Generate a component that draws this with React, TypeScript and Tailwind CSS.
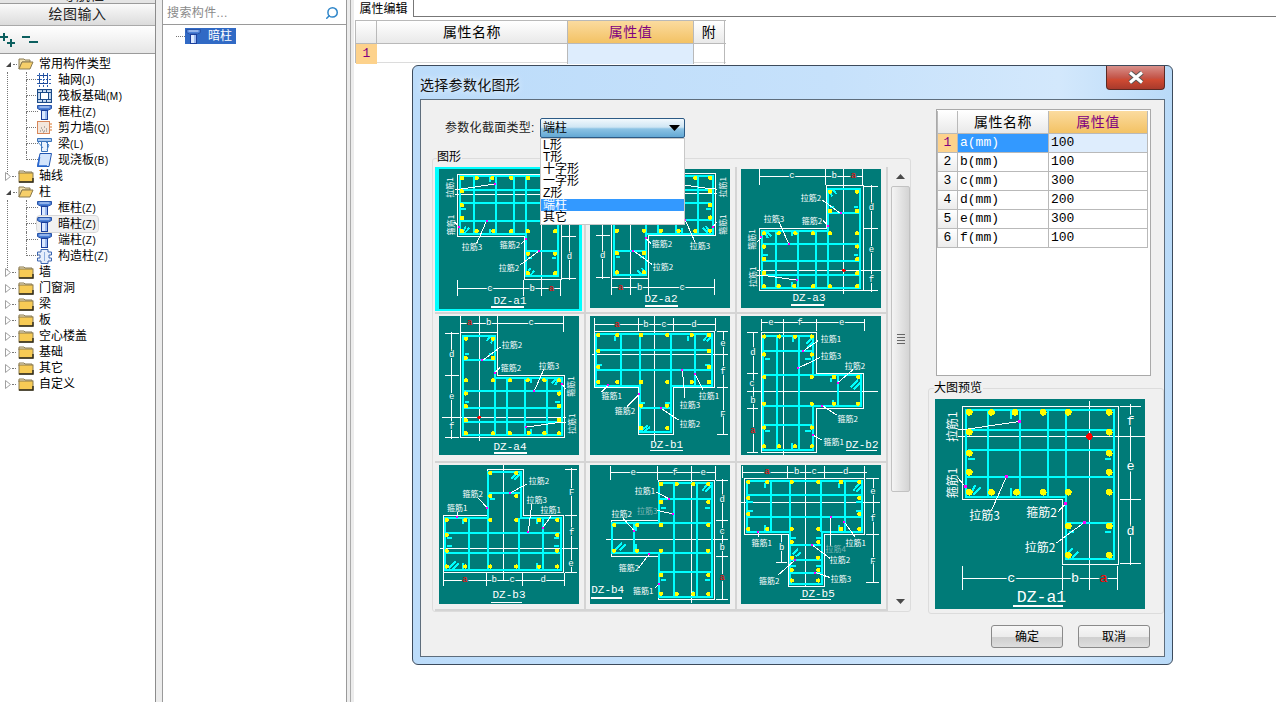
import { Search } from "lucide-react";

type Pt = [number, number];
type Seg = [number, number, number, number];
type Label = { x: number; y: number; t: string; up?: boolean; dim?: boolean; color?: string };
type Plan = {
    wall: Pt[];
    cage: Pt[];
    bars: Seg[];
    hooks: Seg[];
    thin: Seg[];
    dots: Pt[];
    pins: Pt[];
    leaders: Seg[];
    labels: Label[];
    red?: Pt;
};

const rows = (list: [number, number[]][]): Pt[] => list.flatMap(([y, xs]) => xs.map((x) => [x, y] as Pt));
const dimLabels = (list: [string, number, number, string?][]): Label[] =>
    list.map(([t, x, y, color]) => ({ t, x, y, dim: true, color }));

// 端柱 a1, the other three a-types are flips of this one
const a1: Plan = {
    wall: [[18, 5], [122, 5], [122, 110], [85, 110], [85, 67], [18, 67]],
    cage: [[20.5, 7], [119, 7], [119, 106.5], [87, 106.5], [87, 65], [20.5, 65]],
    bars: [
        [35, 7, 35, 65], [56.7, 7, 56.7, 65], [75, 7, 75, 65], [87, 7, 87, 65],
        [20.5, 20.7, 119, 20.7], [22, 33.9, 119, 33.9], [20.5, 51.8, 119, 51.8], [87, 82.4, 119, 82.4],
    ],
    hooks: [
        [23.3, 64, 27, 57.3], [25.5, 64, 30.4, 59], [50.7, 8, 50.7, 13], [50.7, 59.5, 50.7, 65],
        [22, 40, 26.7, 40], [113.3, 40, 117.3, 40], [89, 88.5, 92.6, 88.5], [113.3, 88.5, 117.3, 88.5],
        [87.8, 104, 91.6, 99.5], [91.8, 105.8, 95.5, 101.8],
    ],
    thin: [
        [102.9, 1, 102.9, 127], [15.6, 25, 140, 25], [130.4, 3, 130.4, 110.7], [123, 5, 137, 5],
        [123, 67.3, 137, 67.3], [123, 109.6, 137, 109.6], [17.8, 119.5, 121.8, 119.5], [18.2, 111, 18.2, 127],
        [84.9, 111, 84.9, 127], [121.8, 111, 121.8, 127],
    ],
    dots: rows([
        [8.9, [22.9, 37.6, 53.3, 72.2, 88.9, 116.2]],
        [22.2, [22.9, 116.2]],
        [36.2, [22.9, 116.2]],
        [48.9, [22.9, 116.2]],
        [62.2, [22.9, 37.6, 54.4, 72.2, 88.9, 116.2]],
        [84.7, [88.9, 116.2]],
        [104.2, [88.9, 116.2]],
    ]),
    pins: [[56.2, 15], [20.2, 58.2], [47.6, 51.8], [87, 69.8], [99.6, 82.2]],
    leaders: [
        [15.6, 20.2, 22, 20], [22, 20, 56.2, 15], [15.6, 53, 20.2, 58.2], [37.8, 74, 47.6, 51.8],
        [82.2, 75, 87, 69.8], [81, 96, 99.6, 82.2],
    ],
    labels: [
        { t: "拉筋1", x: 11, y: 18.4, up: true },
        { t: "箍筋1", x: 11, y: 56, up: true },
        { t: "拉筋3", x: 33, y: 77 },
        { t: "箍筋2", x: 71, y: 75 },
        { t: "拉筋2", x: 70, y: 98 },
        ...dimLabels([["f", 130.4, 15], ["e", 130.4, 45], ["d", 130.4, 88], ["c", 50.9, 119.5], ["b", 93.3, 119.5], ["a", 112.4, 119.5, "#ff0000"]]),
    ],
    red: [102.9, 25],
};

const mapPlan = (p: Plan, fx: (x: number) => number, fy: (y: number) => number): Plan => {
    const pt = ([x, y]: Pt): Pt => [fx(x), fy(y)];
    const seg = ([a, b, c, d]: Seg): Seg => [fx(a), fy(b), fx(c), fy(d)];
    return {
        wall: p.wall.map(pt),
        cage: p.cage.map(pt),
        bars: p.bars.map(seg),
        hooks: p.hooks.map(seg),
        thin: p.thin.map(seg),
        dots: p.dots.map(pt),
        pins: p.pins.map(pt),
        leaders: p.leaders.map(seg),
        labels: p.labels.map((l) => ({ ...l, x: fx(l.x), y: fy(l.y) })),
        red: p.red && pt(p.red),
    };
};

const same = (v: number) => v;
const flipX = (x: number) => 143 - x;
const flipY = (y: number) => 127 - y;

const b1: Plan = {
    wall: [[4, 16], [124, 16], [124, 72], [83, 72], [83, 119], [48, 119], [48, 72], [4, 72]],
    cage: [[6, 18], [122, 18], [122, 70], [81, 70], [81, 117], [50, 117], [50, 70], [6, 70]],
    bars: [[31, 18, 31, 70], [50, 18, 50, 70], [81, 18, 81, 70], [105, 18, 105, 70], [6, 34, 122, 34], [6, 54.7, 122, 54.7], [50, 93, 81, 93]],
    hooks: [[25, 20, 25, 25], [98.3, 20, 98.3, 25], [113.3, 24.7, 119.3, 18], [116.7, 25.3, 123, 19.3], [6.7, 49, 11.7, 49], [115, 49, 120, 49], [50, 88, 55, 88], [75, 88, 81, 88], [50, 116, 58, 110], [54, 116, 60, 112]],
    thin: [[64.3, 0, 64.3, 126], [2, 39, 138, 39], [4, 8.7, 125, 8.7], [4, 2.3, 4, 14.7], [48.3, 2.3, 48.3, 14.7], [83, 2.3, 83, 14.7], [125, 2.3, 125, 14.7], [133.3, 14.7, 133.3, 119], [127, 16, 138, 16], [127, 72, 138, 72], [127, 119, 138, 119]],
    dots: rows([[19, [8.3, 27.3, 51, 77.3, 101.7, 119]], [35.3, [8.3, 119]], [51.3, [8.3, 119]], [66.3, [8.3, 27.3, 51, 77.3, 101.7, 119]], [90.3, [51, 77.3]], [113, [51, 77.3]]]),
    pins: [[18.3, 69.7], [49.3, 79], [92.3, 54], [105, 58], [71, 93]],
    leaders: [[11.7, 76.3, 18.3, 69.7], [36.7, 91.3, 49.3, 79], [95, 83, 92.3, 54], [113, 74.7, 105, 58], [88.3, 104.7, 71, 93]],
    labels: [
        { t: "箍筋1", x: 21.7, y: 80 }, { t: "箍筋2", x: 35, y: 95.7 }, { t: "拉筋3", x: 100, y: 88.7 },
        { t: "拉筋1", x: 119, y: 80 }, { t: "拉筋2", x: 100, y: 108.7 },
        ...dimLabels([["a", 27.3, 9, "#ff0000"], ["b", 56, 9], ["c", 74, 9], ["d", 104, 9], ["e", 133, 28], ["f", 133, 56], ["F", 133, 99.7]]),
    ],
};

const b2: Plan = {
    wall: [[20, 17], [75, 17], [75, 58], [122, 58], [122, 93], [75, 93], [75, 137], [20, 137]],
    cage: [[21.5, 19.7], [72.3, 19.7], [72.3, 59.7], [120, 59.7], [120, 90.7], [72.3, 90.7], [72.3, 134.7], [21.5, 134.7]],
    bars: [[36.3, 20, 36.3, 135], [58, 20, 58, 135], [96.7, 60, 96.7, 91], [21.5, 35.7, 72, 35.7], [21.5, 59.7, 72, 59.7], [21.5, 90.7, 72, 90.7], [21.5, 109.7, 72, 109.7]],
    hooks: [[52, 21, 52, 26], [65, 28, 71, 22], [66, 32, 72, 26], [24, 43, 29, 43], [64, 43, 70, 43], [24, 116, 29, 116], [64, 116, 70, 116], [51, 128, 51, 134], [90, 62, 90, 66], [110, 72, 117, 64], [113, 74, 119, 67], [92, 85, 92, 90]],
    thin: [[42.3, 3, 42.3, 141], [6, 76.3, 137, 76.3], [20, 7, 124, 7], [20, 3, 20, 14.7], [75.7, 3, 75.7, 14.7], [123, 3, 123, 14.7], [12.3, 16, 12.3, 138], [6, 17, 17, 17], [6, 58, 17, 58], [6, 93, 17, 93], [6, 137, 17, 137]],
    dots: rows([[20.7, [23.3, 38.3, 54, 70.7]], [38.7, [23.3, 70.7]], [61.3, [23.3, 70.7, 93, 117.3]], [88.3, [23.3, 70.7, 93, 117.3]], [112.3, [23.3, 70.7]], [131.3, [23.3, 38.3, 54, 70.7]]]),
    pins: [[62.3, 35.3], [57.3, 52.3], [96.7, 67.3], [81.3, 90.3], [72.3, 120.3]],
    leaders: [[77.3, 24.7, 62.3, 35.3], [79, 42, 57.3, 52.3], [112.3, 53.7, 96.7, 67.3], [95.7, 99.7, 81.3, 90.3], [80.7, 124.7, 72.3, 120.3]],
    labels: [
        { t: "拉筋1", x: 90, y: 23 }, { t: "拉筋3", x: 90, y: 40.3 }, { t: "拉筋2", x: 114, y: 49.7 },
        { t: "箍筋2", x: 106.7, y: 103.7 }, { t: "箍筋1", x: 92.7, y: 126.3 },
        ...dimLabels([["e", 30, 7], ["f", 59, 7], ["e", 100.7, 7], ["d", 12, 37], ["c", 11, 69], ["b", 12, 86], ["a", 12, 115.7, "#ff0000"]]),
    ],
};

const b3: Plan = {
    wall: [[48, 5], [84, 5], [84, 51], [124, 51], [124, 108], [4, 108], [4, 51], [48, 51]],
    cage: [[49.3, 6.7], [81.7, 6.7], [81.7, 53], [121.7, 53], [121.7, 105.7], [6, 105.7], [6, 53], [49.3, 53]],
    bars: [[29.7, 53, 29.7, 106], [49.3, 53, 49.3, 106], [80, 53, 80, 106], [104.3, 53, 104.3, 106], [49.3, 28.3, 81, 28.3], [6, 68, 122, 68], [6, 89, 122, 89]],
    hooks: [[72, 14, 78, 8], [75, 15, 81, 9], [51, 34, 56, 34], [24, 54, 24, 59], [98, 54, 98, 59], [8, 74, 13, 74], [115, 74, 120, 74], [8, 82, 13, 82], [115, 82, 120, 82], [10, 104, 17, 97], [14, 105, 20, 99], [24, 99, 24, 105], [98, 99, 98, 105]],
    thin: [[64.3, 0, 64.3, 117], [1, 84, 139, 84], [4, 116.3, 126, 116.3], [4.3, 109, 4.3, 121.7], [47.7, 109, 47.7, 121.7], [83.7, 109, 83.7, 121.7], [125, 109, 125, 121.7], [132.7, 3.3, 132.7, 109], [126, 4.7, 137.7, 4.7], [126, 51.3, 137.7, 51.3], [126, 108, 137.7, 108]],
    dots: rows([[8.3, [51.3, 77.3]], [31.3, [51.3, 77.3]], [55.3, [7.7, 26.3, 51.3, 77.3, 100, 118.3]], [70.3, [7.7, 118.3]], [86.3, [7.7, 118.3]], [102.3, [7.7, 26.3, 51.3, 77.3, 100, 118.3]]]),
    pins: [[71.3, 28.3], [48.3, 43.3], [89.3, 67.3], [103.7, 63.3], [18.3, 52.3]],
    leaders: [[87.7, 19, 71.3, 28.3], [39.3, 33.3, 48.3, 43.3], [92.7, 39.7, 89.3, 67.3], [112.7, 50.7, 103.7, 63.3], [18.3, 47.3, 18.3, 52.3]],
    labels: [
        { t: "拉筋2", x: 100, y: 15.7 }, { t: "箍筋2", x: 33.7, y: 28.3 }, { t: "拉筋3", x: 97.7, y: 35 },
        { t: "箍筋1", x: 18.3, y: 43.3 }, { t: "拉筋1", x: 111.7, y: 44.7 },
        ...dimLabels([["a", 26, 116, "#ff0000"], ["b", 55.3, 116], ["c", 73.3, 116], ["d", 104.3, 116], ["F", 132.7, 28], ["f", 132.7, 69], ["e", 132, 99.7]]),
    ],
};

const b4: Plan = {
    wall: [[68, 16], [124, 16], [124, 135], [68, 135], [68, 92], [21, 92], [21, 56], [68, 56]],
    cage: [[69.3, 17.7], [122, 17.7], [122, 132.7], [69.3, 132.7], [69.3, 89], [22.3, 89], [22.3, 58.3], [69.3, 58.3]],
    bars: [[84.3, 18, 84.3, 133], [106.7, 18, 106.7, 133], [44.3, 58, 44.3, 89], [69, 34.7, 122, 34.7], [22, 58, 122, 58], [22, 89, 122, 89], [69, 107.3, 122, 107.3]],
    hooks: [[112, 26, 118, 19], [115, 27, 121, 21], [71, 43, 76, 43], [115, 43, 120, 43], [26, 85, 32, 78], [30, 86, 36, 80], [46, 60, 46, 66], [46, 80, 46, 88], [71, 116, 76, 116], [115, 116, 120, 116], [84, 127, 84, 132], [103, 127, 103, 132]],
    thin: [[101.7, 1, 101.7, 139], [16, 75, 138, 75], [20, 8, 125, 8], [20, 1.3, 20, 14.7], [67.7, 1.3, 67.7, 14.7], [125, 1.3, 125, 14.7], [132.3, 14, 132.3, 135.7], [126, 15.7, 138, 15.7], [126, 56.3, 138, 56.3], [126, 92.3, 138, 92.3], [126, 135, 138, 135]],
    dots: rows([[19.3, [71, 86.7, 103.3, 118.3]], [37.3, [71, 118.3]], [60.3, [24.3, 47.3, 71, 118.3]], [86.3, [24.3, 47.3, 71, 118.3]], [110.7, [71, 118.3]], [129.7, [71, 86.7, 103.3, 118.3]]]),
    pins: [[79.3, 34.3], [83.3, 49.3], [44.3, 66.3], [59.3, 89.7], [69.3, 119.7]],
    leaders: [[66.7, 27.3, 79.3, 34.3], [66.7, 45.7, 83.3, 49.3], [33.3, 54, 44.3, 66.3], [48.3, 104, 59.3, 89.7], [65, 124, 69.3, 119.7]],
    labels: [
        { t: "拉筋1", x: 55, y: 25.7 }, { t: "拉筋3", x: 57.3, y: 45.7, color: "#7fb5b3" }, { t: "拉筋2", x: 31.7, y: 49 },
        { t: "箍筋2", x: 39, y: 103.3 }, { t: "箍筋1", x: 53.3, y: 126.3 },
        ...dimLabels([["e", 43.3, 8], ["f", 85, 8], ["e", 113.3, 8], ["d", 132.3, 35.7], ["c", 132.3, 67.3], ["b", 132.3, 84], ["a", 132.3, 114, "#ff0000"]]),
    ],
};

const b5: Plan = {
    wall: [[3, 14], [123, 14], [123, 70], [83, 70], [83, 122], [47, 122], [47, 70], [3, 70]],
    cage: [[5.7, 16], [120.7, 16], [120.7, 67.3], [80.7, 67.3], [80.7, 119.7], [49, 119.7], [49, 67.3], [5.7, 67.3]],
    bars: [[29.7, 16, 29.7, 67], [49, 16, 49, 67], [79.5, 16, 79.5, 67], [104, 16, 104, 67], [6, 30.7, 121, 30.7], [6, 52.7, 121, 52.7], [49, 80.7, 81, 80.7], [49, 95.7, 81, 95.7], [49, 109, 81, 109]],
    hooks: [[112, 26, 118, 19], [115, 27, 121, 21], [24, 18, 24, 23], [98, 18, 98, 23], [7, 37, 12, 37], [115, 37, 120, 37], [7, 46, 12, 46], [115, 46, 120, 46], [24, 60, 24, 66], [98, 60, 98, 66], [52, 90, 57, 84], [55, 92, 60, 88], [50, 74, 55, 74], [75, 74, 80, 74], [75, 102, 80, 102], [50, 102, 55, 102]],
    thin: [[64.7, 0, 64.7, 123], [0, 37.3, 139, 37.3], [1.3, 7.3, 125.7, 7.3], [1.3, 1, 1.3, 13], [46, 1, 46, 13], [83.3, 1, 83.3, 13], [123.3, 1, 123.3, 13], [132.3, 13, 132.3, 118], [125, 14, 138, 14], [125, 70, 138, 70], [125, 118, 138, 118], [40.7, 70, 40.7, 98], [35, 70, 46, 70], [35, 98, 46, 98]],
    dots: rows([[17.3, [7.3, 26.3, 50.7, 77.3, 100, 118.3]], [33.3, [7.3, 118.3]], [49.3, [7.3, 118.3]], [64.3, [7.3, 26.3, 50.7, 77.3, 100, 118.3]], [77.3, [50.7, 77.3]], [93.3, [50.7, 77.3]], [105.7, [50.7, 77.3]], [116.3, [50.7, 77.3]]]),
    pins: [[17.3, 67.3], [89.7, 52.7], [103.3, 57.3], [71.3, 80.7], [54, 95.7], [74.3, 108.3]],
    leaders: [[17.3, 67.3, 17.3, 73], [89.7, 52.7, 89.7, 82], [103.3, 57.3, 114, 72.3], [71.3, 80.7, 89, 94], [54, 95.7, 37.3, 110.7], [74.3, 108.3, 89, 113.3]],
    labels: [
        { t: "箍筋1", x: 20.7, y: 78 }, { t: "拉筋1", x: 114.7, y: 78 }, { t: "拉筋4", x: 94.7, y: 84, color: "#7fb5b3" },
        { t: "拉筋2", x: 99, y: 94.7 }, { t: "箍筋2", x: 28.3, y: 116.7 }, { t: "拉筋3", x: 100, y: 114.7 },
        ...dimLabels([["a", 26.3, 7, "#ff0000"], ["b", 55.7, 7], ["c", 73.3, 7], ["d", 104.7, 7], ["e", 132, 27], ["f", 132, 54], ["F", 132, 98], ["b", 40.7, 84]]),
    ],
};

type Tile = { plan: Plan; name: string; tx: number; ty: number; ux: number; uw: number; uy: number };

const tiles: Tile[] = [
    { plan: a1, name: "DZ-a1", tx: 71, ty: 132, ux: 52, uw: 33, uy: 138 },
    { plan: mapPlan(a1, flipX, same), name: "DZ-a2", tx: 71, ty: 131, ux: 55, uw: 33, uy: 138 },
    { plan: mapPlan(a1, same, flipY), name: "DZ-a3", tx: 68, ty: 130, ux: 50, uw: 33, uy: 137 },
    { plan: mapPlan(a1, flipX, flipY), name: "DZ-a4", tx: 71, ty: 132, ux: 55, uw: 33, uy: 138 },
    { plan: b1, name: "DZ-b1", tx: 76.7, ty: 130, ux: 60, uw: 33, uy: 135.7 },
    { plan: b2, name: "DZ-b2", tx: 121, ty: 130, ux: 105, uw: 31, uy: 135.7 },
    { plan: b3, name: "DZ-b3", tx: 70, ty: 130.7, ux: 52, uw: 31, uy: 138.5 },
    { plan: b4, name: "DZ-b4", tx: 17.7, ty: 126, ux: 1, uw: 31, uy: 134 },
    { plan: b5, name: "DZ-b5", tx: 77.3, ty: 129.7, ux: 59, uw: 31, uy: 135.7 },
];

function Drawing({ tile, big }: { tile: Tile; big?: boolean }) {
    const { plan } = tile;
    const pts = (p: Pt[]) => p.map((q) => q.join(",")).join(" ");
    const thin = { vectorEffect: "non-scaling-stroke" as const };
    const line = (s: Seg, i: number, stroke: string, w: number) => (
        <line key={i} x1={s[0]} y1={s[1]} x2={s[2]} y2={s[3]} stroke={stroke} strokeWidth={w} {...thin} />
    );
    return (
        <svg viewBox="0 0 140 140" preserveAspectRatio="none" shapeRendering="crispEdges" className="block h-full w-full bg-[#007b78]">
            <polygon points={pts(plan.wall)} fill="none" stroke="#fff" strokeWidth={1} {...thin} />
            {plan.thin.map((s, i) => line(s, i, "#fff", 1))}
            <polygon points={pts(plan.cage)} fill="none" stroke="#00ffff" strokeWidth={2} {...thin} />
            {plan.bars.map((s, i) => line(s, i, "#00ffff", 2))}
            {plan.hooks.map((s, i) => line(s, i, "#00ffff", 2))}
            {plan.leaders.map((s, i) => line(s, i, "#fff", 1))}
            {plan.dots.map(([x, y], i) => (
                <circle key={i} cx={x} cy={y} r={2.2} fill="#ffff00" />
            ))}
            {plan.pins.map(([x, y], i) => (
                <rect key={i} x={x - 1} y={y - 1} width={2} height={2} fill="#ff00ff" />
            ))}
            {plan.red && <circle cx={plan.red[0]} cy={plan.red[1]} r={big ? 2.2 : 1.7} fill="#ff0000" />}
            {plan.labels.map((l, i) => (
                <text
                    key={i}
                    x={l.x}
                    y={l.y}
                    fontSize={l.dim ? 9 : 8}
                    textAnchor="middle"
                    dominantBaseline="central"
                    fill={l.color ?? "#fff"}
                    stroke={l.dim ? "#007b78" : "none"}
                    strokeWidth={l.dim ? 2 : 0}
                    paintOrder="stroke"
                    transform={l.up ? `rotate(-90 ${l.x} ${l.y})` : undefined}
                    className={l.dim ? "font-['Liberation_Mono',monospace]" : "font-['Noto_Sans_CJK_SC',sans-serif]"}
                >
                    {l.t}
                </text>
            ))}
            <text x={tile.tx} y={tile.ty} fontSize={11} textAnchor="middle" dominantBaseline="central" fill="#fff" className="font-['Liberation_Mono',monospace]">
                {tile.name}
            </text>
            <rect x={tile.ux} y={tile.uy - 0.8} width={tile.uw} height={1.5} fill="#fff" />
        </svg>
    );
}

/* tree icons */
function FolderIcon({ open }: { open?: boolean }) {
    if (open) {
        return (
            <svg width="16" height="14" viewBox="0 0 16 14" className="shrink-0">
                <path d="M1 2h5l1 1h5v2H4L1 12z" fill="#f3e2b0" stroke="#8a7a50" />
                <path d="M4 5h11l-3 7H1z" fill="#f6cf6a" stroke="#8a7a50" />
            </svg>
        );
    }
    return (
        <svg width="16" height="14" viewBox="0 0 16 14" className="shrink-0">
            <path d="M1 2h5l1 1h7v2H1z" fill="#f6eac6" stroke="#8a7a50" />
            <rect x="1" y="4" width="14" height="9" fill="#f7cb55" stroke="#8a7a50" />
            <path d="M1 13h14V9" fill="none" stroke="#2e2a1a" strokeWidth="1.4" />
        </svg>
    );
}

function ColumnIcon() {
    return (
        <svg width="15" height="15" viewBox="0 0 15 15" className="shrink-0">
            <path d="M.5 .5h14v3l-3 1.5h-8l-3-1.5z" fill="#4b7fd6" stroke="#2a55a8" />
            <path d="M2.5 2h10" stroke="#dbe8ff" />
            <rect x="4.5" y="5.5" width="6" height="9" fill="#dce9ff" stroke="#1b3f9c" />
            <path d="M9 6v8" stroke="#5f8be0" />
        </svg>
    );
}

function GridIcon() {
    return (
        <svg width="15" height="14" viewBox="0 0 15 14" className="shrink-0">
            <path d="M0 2.5h15M0 6.5h15M0 10.5h15M2.5 0v14M6.5 0v14M10.5 0v14" stroke="#2d5fb0" strokeDasharray="2 1" />
            <path d="M2.5 2.5h8v8h-8z" fill="none" stroke="#1e4a9a" />
        </svg>
    );
}

function RaftIcon() {
    return (
        <svg width="15" height="14" viewBox="0 0 15 14" className="shrink-0">
            <rect x=".5" y=".5" width="14" height="13" fill="#cfe0f5" stroke="#1d4b88" strokeWidth="1.2" />
            <rect x="3.5" y="3.5" width="8" height="7" fill="#fff" stroke="#1d4b88" />
            <path d="M0 3.5h3M12 3.5h3M0 10.5h3M12 10.5h3M5.5 0v3M9.5 0v3M5.5 11v3M9.5 11v3" stroke="#1d4b88" />
        </svg>
    );
}

function WallIcon() {
    return (
        <svg width="15" height="14" viewBox="0 0 15 14" className="shrink-0">
            <rect x=".5" y=".5" width="12" height="12" fill="#f4e7dc" stroke="#d8875a" />
            <path d="M3 10h1M5 9h1M7 10h1M9 8h1M4 7h1M7 6h1M9 10h1M6 11h1" stroke="#777" />
            <path d="M13 3h2M13 6h2M13 9h2" stroke="#d8772a" />
        </svg>
    );
}

function BeamIcon() {
    return (
        <svg width="15" height="15" viewBox="0 0 15 15" className="shrink-0">
            <path d="M.5 1.5h14v3h-14z" fill="#a9c8ee" stroke="#3a72b8" />
            <path d="M4.5 4.5h6v10h-6z" fill="#eaf2fd" stroke="#3a72b8" />
            <path d="M1 5l5 6M9 5l3 3-2 5" fill="none" stroke="#4f8ad0" />
        </svg>
    );
}

function SlabIcon() {
    return (
        <svg width="15" height="14" viewBox="0 0 15 14" className="shrink-0">
            <path d="M3 .5h11.5L12 13.5H.5z" fill="#d3e4fb" stroke="#1f55b0" />
            <path d="M2.5 4L1 13h9" fill="none" stroke="#2a68d0" strokeWidth="1.6" />
        </svg>
    );
}

function PlugIcon() {
    return (
        <svg width="15" height="15" viewBox="0 0 15 15" className="shrink-0">
            <path d="M4 .5h7v2.5h3.5v3H12v3h2.5v3H11v2.5H4V12H.5V9H3V6H.5V3H4z" fill="#e6eefb" stroke="#3a65b0" />
            <path d="M7.5 3v9" stroke="#8fb0e0" />
        </svg>
    );
}

function Guide({ last }: { last?: boolean }) {
    return (
        <div className="h-full w-[12px] shrink-0">
            <div className="h-1/2 w-full border-b border-l border-dotted border-[#777]" />
            {!last && <div className="h-1/2 w-full border-l border-dotted border-[#777]" />}
        </div>
    );
}

function Expander({ open }: { open?: boolean }) {
    return (
        <div className="flex w-[18px] shrink-0 items-center pl-[5px]">
            {open ? (
                <svg width="7" height="7" viewBox="0 0 7 7">
                    <path d="M6 1v5H1z" fill="#444" />
                </svg>
            ) : (
                <svg width="6" height="9" viewBox="0 0 6 9">
                    <path d="M.5 .5l5 4-5 4z" fill="#fff" stroke="#a0a0a0" />
                </svg>
            )}
            <span className="ml-[1px] w-[4px] border-t border-dotted border-[#777]" />
        </div>
    );
}

function Folder({ name, open }: { name: string; open?: boolean }) {
    return (
        <div className="flex h-4 items-center">
            <Expander open={open} />
            <FolderIcon open={open} />
            <span className="ml-[5px] whitespace-nowrap">{name}</span>
        </div>
    );
}

function Leaf({ icon, name, hot, last, hover }: { icon: React.ReactNode; name: string; hot: string; last?: boolean; hover?: boolean }) {
    return (
        <div className="flex h-4 items-center">
            <Guide last={last} />
            <div className={`-ml-px flex h-4 items-center rounded-[3px] pr-[2px] ${hover ? "bg-[#f1f1f1] outline outline-[#d8d8d8]" : ""}`}>
                {icon}
                <span className="ml-[6px] whitespace-nowrap">
                    {name}
                    <span className="text-[10px] tracking-[0.5px]">{hot}</span>
                </span>
            </div>
        </div>
    );
}

function Group({ children }: { children: React.ReactNode }) {
    return (
        <div className="-mb-[6px] ml-[7px] border-l border-dotted border-[#777] pb-[6px]">
            <div className="ml-[18px]">{children}</div>
        </div>
    );
}

function LeftPanel() {
    return (
        <div className="flex w-[156px] shrink-0 flex-col border-r border-[#8c8c8c] bg-white">
            <div className="h-[4px] overflow-hidden border-b border-[#9a9a9a] bg-[#e4e4e4] pl-[62px]">
                <div className="-mt-[12px] whitespace-nowrap text-[14px] leading-[14px] text-[#222]">导航栏</div>
            </div>
            <div className="flex h-[22px] items-center justify-center border-b border-[#aaa] bg-[linear-gradient(#fafafa,#dcdcdc)] text-[14px] tracking-[0.5px] text-[#222]">
                绘图输入
            </div>
            <div className="flex h-[27px] items-center bg-[linear-gradient(#ffffff,#e6e6e6)] pb-[2px]">
                <svg width="40" height="16" viewBox="0 0 40 16">
                    <path d="M0 6h8M4 2v8M7 12h8M11 8v8M22 6h8M29 11h9" stroke="#0c5f5f" strokeWidth="2" fill="none" />
                </svg>
            </div>
            <div className="flex-1 border-t border-[#9a9a9a] pt-[2px] text-[12px] leading-4 text-black">
                <Folder name="常用构件类型" open />
                <Group>
                    <Leaf icon={<GridIcon />} name="轴网" hot="(J)" />
                    <Leaf icon={<RaftIcon />} name="筏板基础" hot="(M)" />
                    <Leaf icon={<ColumnIcon />} name="框柱" hot="(Z)" />
                    <Leaf icon={<WallIcon />} name="剪力墙" hot="(Q)" />
                    <Leaf icon={<BeamIcon />} name="梁" hot="(L)" />
                    <Leaf icon={<SlabIcon />} name="现浇板" hot="(B)" last />
                </Group>
                <Folder name="轴线" />
                <Folder name="柱" open />
                <Group>
                    <Leaf icon={<ColumnIcon />} name="框柱" hot="(Z)" />
                    <Leaf icon={<ColumnIcon />} name="暗柱" hot="(Z)" hover />
                    <Leaf icon={<ColumnIcon />} name="端柱" hot="(Z)" />
                    <Leaf icon={<PlugIcon />} name="构造柱" hot="(Z)" last />
                </Group>
                {["墙", "门窗洞", "梁", "板", "空心楼盖", "基础", "其它", "自定义"].map((n) => (
                    <Folder key={n} name={n} />
                ))}
            </div>
        </div>
    );
}

function MiddlePanel() {
    return (
        <div className="flex w-[183px] shrink-0 flex-col bg-white">
            <div className="flex h-[25px] items-center justify-between border-b border-[#9a9a9a] pl-[4px] pr-[5px] pt-[1px]">
                <span className="text-[12px] tracking-[0.4px] text-[#8a8a8a]">搜索构件...</span>
                <Search size={14} strokeWidth={2.6} className="mr-[2px] -scale-x-100 text-[#2f86c9]" />
            </div>
            <div className="flex items-center pl-[13px] pt-[3px]">
                <span className="w-[9px] border-t border-dotted border-[#777]" />
                <div className="flex h-4 w-[51px] items-center bg-[#316ac5] pl-[1px] text-[12px] text-white">
                    <ColumnIcon />
                    <span className="ml-[7px]">暗柱</span>
                </div>
            </div>
        </div>
    );
}

const headCell = "flex items-center justify-center border-r border-[#b9b9b9] bg-[linear-gradient(#ffffff,#e9e9e9)] text-black";
const hotCell = "flex items-center justify-center border-r border-[#b9b9b9] bg-[linear-gradient(#fbdb9f,#f3c264)] text-[#800080]";

function PropertyPage() {
    return (
        <div className="flex min-w-0 flex-1 flex-col bg-white">
            <div className="flex h-[17px]">
                <div className="flex w-[60px] items-center justify-center border-r border-[#777] text-[12px]">属性编辑</div>
                <div className="flex-1 border-b border-[#777]" />
            </div>
            <div className="ml-[1px] mt-[3px] w-[371px] border-l border-t border-[#b9b9b9] text-[14px]">
                <div className="grid h-[23px] grid-cols-[21px_191px_126px_31px] border-b border-[#b9b9b9] tracking-[0.5px]">
                    <div className={headCell} />
                    <div className={headCell}>属性名称</div>
                    <div className={hotCell}>属性值</div>
                    <div className={headCell}>附</div>
                </div>
                <div className="grid h-[19px] grid-cols-[21px_191px_126px_31px] border-b border-[#dcdcdc]">
                    <div className="flex items-center justify-center bg-[#fdd28c] font-['Liberation_Mono',monospace] text-[13px] text-[#800080]">1</div>
                    <div className="border-r border-[#b9b9b9]" />
                    <div className="border-r border-[#b9b9b9] bg-[#deedfd]" />
                    <div className="border-r border-[#b9b9b9]" />
                </div>
            </div>
        </div>
    );
}

const params = [
    ["a(mm)", "100"],
    ["b(mm)", "100"],
    ["c(mm)", "300"],
    ["d(mm)", "200"],
    ["e(mm)", "300"],
    ["f(mm)", "100"],
];

function ParamTable() {
    return (
        <div className="h-[267px] w-[215px] border border-[#a9a9a9] bg-white pt-[1px]">
            <div className="w-[211px] border-l border-[#b9b9b9] text-[14px]">
                <div className="grid h-[23px] grid-cols-[20px_91px_99px] border-b border-[#b9b9b9] tracking-[0.5px]">
                    <div className={headCell} />
                    <div className={headCell}>属性名称</div>
                    <div className={hotCell}>属性值</div>
                </div>
                {params.map(([name, val], i) => (
                    <div key={name} className="grid h-[19px] grid-cols-[20px_91px_99px] border-b border-[#b9b9b9] font-['Liberation_Mono',monospace] text-[13px] leading-[18px]">
                        <div className={`flex items-center justify-center border-r border-[#b9b9b9] ${i === 0 ? "bg-[#fdd28c] text-[#800080]" : "bg-[linear-gradient(#ffffff,#ececec)] text-black"}`}>
                            {i + 1}
                        </div>
                        <div className={`border-r border-[#b9b9b9] pl-[2px] ${i === 0 ? "bg-[#3399ff] text-white" : "text-black"}`}>{name}</div>
                        <div className={`border-r border-[#b9b9b9] pl-[2px] text-black ${i === 0 ? "bg-[#deedfd]" : ""}`}>{val}</div>
                    </div>
                ))}
            </div>
        </div>
    );
}

function ComboList() {
    const items = ["L形", "T形", "十字形", "一字形", "Z形", "端柱", "其它"];
    return (
        <div className="absolute left-[119px] top-[38px] z-10 w-[145px] border border-[#c8c8c8] bg-white pb-[1px] text-[12px] leading-[12px] text-black">
            {items.map((t) => (
                <div key={t} className={`h-[12px] whitespace-nowrap pl-[2px] ${t === "端柱" ? "bg-[#3399ff] text-white" : ""}`}>
                    {t}
                </div>
            ))}
        </div>
    );
}

function ScrollArrow({ down }: { down?: boolean }) {
    return (
        <div className="flex h-[19px] items-center justify-center">
            <svg width="9" height="5" viewBox="0 0 9 5">
                <path d={down ? "M0 0h9L4.5 5z" : "M0 5h9L4.5 0z"} fill="#4a4a4a" />
            </svg>
        </div>
    );
}

function ScrollBar() {
    return (
        <div className="ml-[3px] flex w-[19px] flex-col">
            <ScrollArrow />
            <div className="flex-1">
                <div className="flex h-[306px] flex-col items-center justify-center gap-[2px] rounded-[2px] border border-[#c2c2c2] bg-[linear-gradient(90deg,#f4f4f4,#d4d4d4)]">
                    <span className="h-px w-[8px] bg-[#666]" />
                    <span className="h-px w-[8px] bg-[#666]" />
                    <span className="h-px w-[8px] bg-[#666]" />
                    <span className="h-px w-[8px] bg-[#666]" />
                </div>
            </div>
            <ScrollArrow down />
        </div>
    );
}

function DialogButton({ text }: { text: string }) {
    return (
        <button className="h-[23px] w-[72px] rounded-[3px] border border-[#8a8a8a] bg-[linear-gradient(#f7f7f7_0%,#ececec_50%,#cfcfcf_55%,#dedede_100%)] text-[12px] text-black">
            {text}
        </button>
    );
}

function ShapeDialog() {
    return (
        <div className="absolute left-[412px] top-[65px] flex h-[600px] w-[761px] flex-col rounded-[6px] border border-[#3d4b5c] bg-[linear-gradient(90deg,#bcdcfa,#c6e1fb_55%,#d3e8fc_85%,#b9daf8)] px-[7px] pb-[7px]">
            <div className="flex h-[33px] shrink-0 items-start justify-between">
                <span className="pt-[9px] text-[14px] tracking-[0.3px] text-[#111] [text-shadow:0_0_6px_#fff]">选择参数化图形</span>
                <div className="flex h-[24px] w-[59px] items-center justify-center rounded-b-[4px] border border-t-0 border-[#5b2a24] bg-[linear-gradient(#d9908a,#c4564a_50%,#cf4a32_60%,#a83a2c)]">
                    <svg width="18" height="13" viewBox="0 0 18 13">
                        <path d="M3 1.5l12 10M15 1.5l-12 10" stroke="#555" strokeWidth="5" />
                        <path d="M3 1.5l12 10M15 1.5l-12 10" stroke="#fff" strokeWidth="3" />
                    </svg>
                </div>
            </div>
            <div className="flex flex-1 flex-col border border-[#5e6d7c] bg-[#f0f0f0] text-[12px]">
                <div className="flex h-[514px]">
                    <div className="relative w-[490px] shrink-0 pl-[11px]">
                        <div className="flex h-[58px] items-start pl-[13px] pt-[18px]">
                            <span className="flex h-[20px] w-[95px] items-center whitespace-nowrap tracking-[0.3px] text-[#222]">参数化截面类型:</span>
                            <div className="flex h-[20px] w-[145px] items-center justify-between rounded-[2px] border border-[#2c5a85] bg-[linear-gradient(#f2f9fd,#cfe6f4_45%,#8cc3e4_55%,#63a8d4)] pl-[2px] pr-[4px] text-black">
                                <span>端柱</span>
                                <svg width="11" height="6" viewBox="0 0 11 6">
                                    <path d="M0 0h11L5.5 6z" fill="#000" />
                                </svg>
                            </div>
                        </div>
                        <ComboList />
                        <div className="relative h-[454px] w-[479px] rounded-[3px] border border-[#dcdcdc]">
                            <span className="absolute -top-[9px] left-[4px] bg-[#f0f0f0] pr-[1px] leading-[14px] text-black">图形</span>
                            <div className="flex h-[452px] pl-[2px] pt-[8px]">
                                <div className="grid h-[444px] grid-cols-[151px_151px_151px] grid-rows-[147px_149px_148px]">
                                    {tiles.map((tile, i) => (
                                        <div key={tile.name} className="border-b-2 border-r-2 border-b-[#d4d4d4] border-r-[#d4d4d4]">
                                            <div className={i === 0 ? "h-[144px] w-[147px] border-[4px] border-b-[2px] border-r-[3px] border-t-[2px] border-[#00ffff]" : "ml-[4px] mt-[2px] h-[139px] w-[140px]"}>
                                                <Drawing tile={tile} />
                                            </div>
                                        </div>
                                    ))}
                                </div>
                                <ScrollBar />
                            </div>
                        </div>
                    </div>
                    <div className="ml-[17px] flex w-[236px] shrink-0 flex-col pt-[9px]">
                        <div className="ml-[8px]">
                            <ParamTable />
                        </div>
                        <div className="relative mt-[12px] h-[226px] w-[236px] rounded-[3px] border border-[#dcdcdc] pl-[6px] pt-[10px]">
                            <span className="absolute -top-[8px] left-[5px] bg-[#f0f0f0] pr-[1px] leading-[14px] text-black">大图预览</span>
                            <div className="h-[210px] w-[210px]">
                                <Drawing tile={tiles[0]} big />
                            </div>
                        </div>
                    </div>
                </div>
                <div className="flex flex-1 items-start justify-end gap-[15px] pr-[14px] pt-[11px]">
                    <DialogButton text="确定" />
                    <DialogButton text="取消" />
                </div>
            </div>
        </div>
    );
}

export default function App() {
    return (
        <div className="relative flex h-[702px] w-[1276px] overflow-hidden bg-white font-['Liberation_Sans','Noto_Sans_CJK_SC',sans-serif]">
            <LeftPanel />
            <div className="w-[7px] shrink-0 border-r border-[#9a9a9a] bg-[#ececec]" />
            <MiddlePanel />
            <div className="flex w-[8px] shrink-0 justify-center gap-[2px] border-l border-[#9a9a9a] bg-[#ececec]">
                <span className="w-px bg-[#aaa]" />
            </div>
            <PropertyPage />
            <ShapeDialog />
        </div>
    );
}
